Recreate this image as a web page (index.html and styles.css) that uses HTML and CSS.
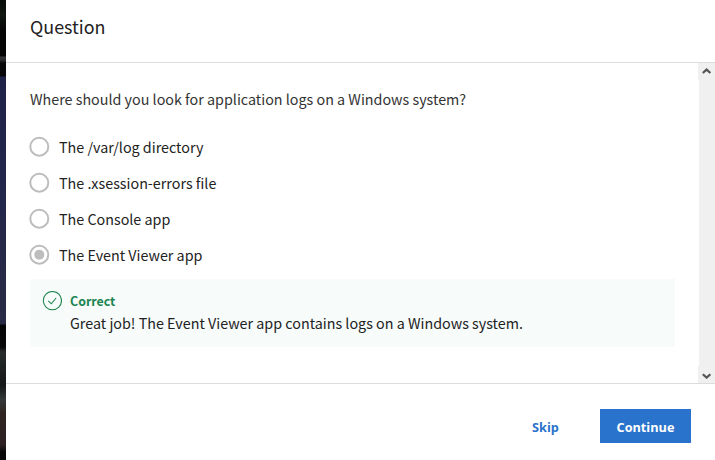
FILE: index.html
```
<!DOCTYPE html>
<html lang="en">
<head>
<meta charset="utf-8">
<title>Question</title>
<link rel="stylesheet" href="styles.css">
</head>
<body>
<div class="screen">
  <div class="backdrop"></div>
  <main class="dialog">
    <header class="header"><h1 class="title">Question</h1></header>
    <div class="body">
      <div class="content">
        <p class="prompt">Where should you look for application logs on a Windows system?</p>
        <ul class="options">
          <li class="option"><svg class="radio" viewBox="0 0 20 20"><circle cx="10.3" cy="9.7" r="9"/></svg><span class="label">The /var/log directory</span></li>
          <li class="option"><svg class="radio" viewBox="0 0 20 20"><circle cx="10.3" cy="9.7" r="9"/></svg><span class="label">The .xsession-errors file</span></li>
          <li class="option"><svg class="radio" viewBox="0 0 20 20"><circle cx="10.3" cy="9.7" r="9"/></svg><span class="label">The Console app</span></li>
          <li class="option"><svg class="radio" viewBox="0 0 20 20"><circle cx="10.3" cy="9.7" r="9"/><circle class="dot" cx="10.3" cy="9.7" r="5"/></svg><span class="label">The Event Viewer app</span></li>
        </ul>
        <section class="feedback">
          <svg class="tick" viewBox="0 0 20 20" width="20" height="20"><circle cx="10.4" cy="9.6" r="9.1"/><path d="M6.3 9.8l3 3 4.8-5.8"/></svg>
          <div>
            <div class="verdict">Correct</div>
            <div class="message">Great job! The Event Viewer app contains logs on a Windows system.</div>
          </div>
        </section>
      </div>
      <div class="scrollbar">
        <div class="arrow"><svg width="10" height="8" viewBox="0 0 10 8"><path d="M.8 5L4.6 1.6 8.4 5"/></svg></div>
        <div class="arrow"><svg width="10" height="8" viewBox="0 0 10 8"><path d="M.8 3.2L4.6 6.6 8.4 3.2"/></svg></div>
      </div>
    </div>
    <footer class="footer">
      <button class="skip">Skip</button>
      <button class="continue">Continue</button>
    </footer>
  </main>
</div>
</body>
</html>
```
FILE: styles.css
```
* { box-sizing: border-box; }
body { margin: 0; font-family: "Noto Sans CJK SC", "Open Sans", sans-serif; background: #fff; color: #222; }
.screen { display: flex; width: 715px; height: 460px; overflow: hidden; }
.backdrop {
  width: 6px;
  background: linear-gradient(#080b08 0, #101610 15px, #050505 30px, #050505 56px, #38383a 57px, #242426 61px, #08080a 63px, #08080a 76px, #202347 77px, #22264a 180px, #2a2b45 324px, #050508 325px, #08080a 347px, #282b2c 352px, #151718 385px, #343838 400px, #302422 413px, #2e2023 445px, #080808 452px);
}
.dialog { flex: 1; display: flex; flex-direction: column; background: #fff; }
.header { height: 63px; padding: 13px 24px 0; border-bottom: 1px solid #dcdcdc; }
.title { margin: 0; font-size: 17.9px; line-height: 26px; font-weight: 400; }
.body { height: 321px; display: flex; border-bottom: 1px solid #dcdcdc; }
.content { flex: 1; padding: 24px 23px 0 24px; }
.prompt { margin: 0; font-size: 14.32px; line-height: 24px; color: #333; white-space: nowrap; }
.options { list-style: none; margin: 18px 0 0; padding: 0; }
.option { display: flex; height: 36px; align-items: center; gap: 10px; margin-left: -1px; }
.radio { width: 20px; height: 20px; overflow: visible; fill: none; stroke: #bdbdbd; stroke-width: 2; }
.dot { fill: #bdbdbd; stroke: none; }
.label { font-size: 14.32px; line-height: 24px; white-space: nowrap; }
.feedback { display: flex; gap: 8px; width: 645px; height: 68px; margin-top: 6px; padding: 12px 12px 0; background: #f7fbfa; }
.tick { fill: none; stroke: #238654; stroke-width: 1.1; }
.verdict { font-size: 12.4px; line-height: 20px; font-weight: 700; color: #1c8552; }
.message { font-size: 14.32px; line-height: 24px; white-space: nowrap; }
.scrollbar { width: 17px; display: flex; flex-direction: column; justify-content: space-between; background: linear-gradient(90deg, #fff 1px, #f0f0f0 1px); }
.arrow { height: 17px; display: flex; align-items: center; justify-content: center; background: #f0f0f0; }
.arrow svg { fill: none; stroke: #555; stroke-width: 2.2; }
.footer { flex: 1; display: flex; justify-content: flex-end; gap: 24px; padding: 25px 24px 0 0; }
button { height: 34px; padding: 2px 0 0; border: 0; font: 700 12.7px/30px "Open Sans", sans-serif; }
.skip { width: 61px; background: none; color: #2a73cc; }
.continue { width: 91px; background: #2a73cc; color: #fff; }
```
